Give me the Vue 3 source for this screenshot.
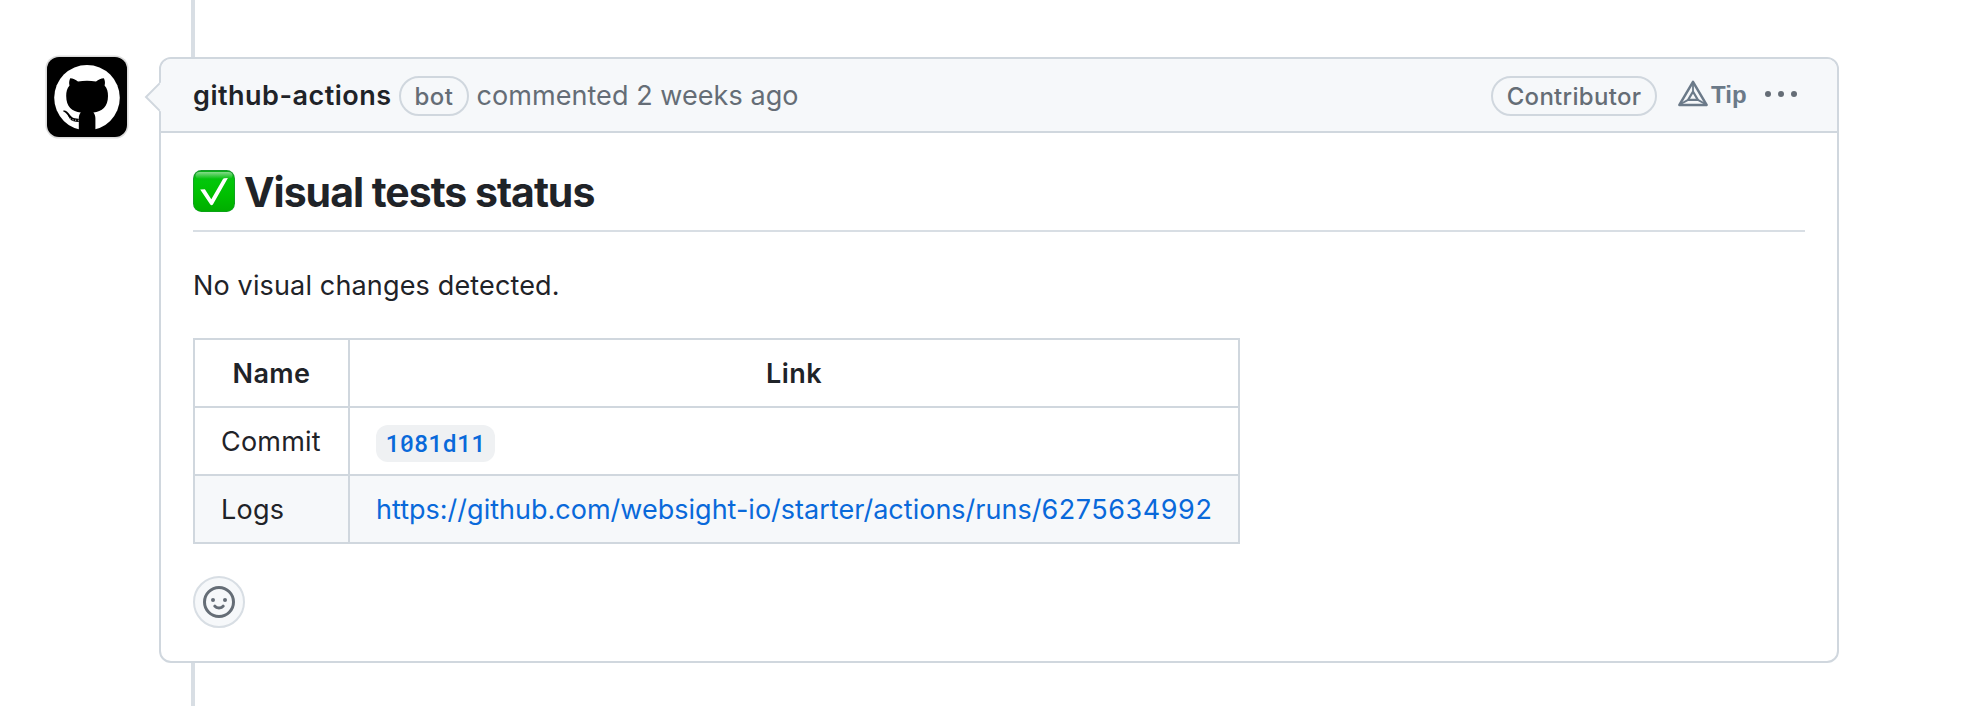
<script setup>
const runPath = 'https://github.com/websight-io/starter/actions/runs/'
const runId = '6275634992'
const commit = '1081d11'
</script>

<template>
  <main class="timeline">
    <svg class="avatar" width="84" height="84" viewBox="-2 -2 84 84">
      <rect x="-1.6" y="-1.6" width="83.2" height="83.2" rx="13.5" fill="#dcdcdc" />
      <rect width="80" height="80" rx="12" fill="#000" />
      <circle cx="40" cy="40.7" r="32.8" fill="#fff" />
      <path
        d="M23.2 21.3C26 21.3 28.6 22.7 31 24.5C37 23.6 43 23.6 49 24.5C51.4 22.7 54 21.3 56.9 21.3C58.2 24 58.2 26.2 57.6 28.6C60.2 31.6 61 35 61 39C61 50 55 54.6 46.4 55.4C47.8 57 48.4 59 48.4 61.5V75H31.8V61.5C31.8 59 32.3 57 33.8 55.4C25 54.6 19.2 50 19.2 39C19.2 35 20 31.6 22.5 28.6C21.9 26.2 22 24 23.2 21.3Z"
        fill="#000"
      />
      <path d="M16.3 53.6C23.5 53.6 21 62 31.8 61.8V65C23 65 22.5 61 20.5 58C19.2 56 17.8 55.4 16.3 54.6Z" fill="#000" />
      <path d="M19.5 57.8C22 62 24.5 63.2 31.5 63.4" fill="none" stroke="#fff" stroke-width=".9" stroke-dasharray="1 1.7" />
    </svg>

    <article class="comment">
      <svg class="caret" width="17" height="30" viewBox="0 0 17 30">
        <path d="M17 .5L15.5 1.5L2 15L15.5 28.5L17 29.5Z" fill="#f6f8fa" />
        <path d="M15.6 1.4L2 15L15.6 28.6" fill="none" stroke="#d0d7de" stroke-width="2" />
      </svg>

      <header class="head">
        <strong class="author">github-actions</strong>
        <span class="pill bot">bot</span>
        <span class="when">commented 2 weeks ago</span>
        <span class="pill role">Contributor</span>
        <span class="tip">
          <svg width="30" height="27" viewBox="0 0 30 27" fill="none" stroke="#6b7a89" stroke-linejoin="round">
            <path d="M15 1.8L28.6 24.9H1.4Z" stroke-width="2.5" />
            <path d="M15 11.6L19.9 19.9H10.1Z" stroke-width="2.1" />
            <path d="M15 2V11.6M1.8 24.5L10.1 19.9M28.2 24.5L19.9 19.9" stroke-width="1.8" />
          </svg>
          <b>Tip</b>
        </span>
        <svg class="more" width="32" height="32" viewBox="0 0 32 32" fill="#656d76">
          <circle cx="3" cy="16" r="3" /><circle cx="16" cy="16" r="3" /><circle cx="29" cy="16" r="3" />
        </svg>
      </header>

      <div class="body">
        <h2>
          <svg width="42" height="42" viewBox="0 0 42 42">
            <defs>
              <linearGradient id="tick-bg" x1="0" y1="0" x2="0" y2="1">
                <stop offset="0" stop-color="#08b414" /><stop offset=".25" stop-color="#02c60a" />
                <stop offset=".6" stop-color="#00bf00" /><stop offset="1" stop-color="#00ad00" />
              </linearGradient>
              <linearGradient id="tick-gloss" x1="0" y1="0" x2="0" y2="1">
                <stop offset="0" stop-color="#fff" stop-opacity=".5" /><stop offset="1" stop-color="#fff" stop-opacity="0" />
              </linearGradient>
            </defs>
            <rect width="42" height="42" rx="8.5" fill="#159b2a" />
            <rect x=".8" y="1.3" width="40.4" height="40.2" rx="8" fill="url(#tick-bg)" />
            <rect x="2.5" y="2" width="37" height="7" rx="4" fill="url(#tick-gloss)" />
            <path d="M7.2 19.6L11.9 19.3L18.3 29.3L30 9Q30.5 8.2 31.4 8.2L34.9 8L19.9 34.4Q18.6 36 17.3 34.4Z" fill="#fff" />
          </svg>
          <span>Visual tests status</span>
        </h2>

        <p>No visual changes detected.</p>

        <table>
          <colgroup><col class="c-name" /><col class="c-link" /></colgroup>
          <thead>
            <tr><th>Name</th><th>Link</th></tr>
          </thead>
          <tbody>
            <tr><td class="label">Commit</td><td class="cell-code"><a class="code">{{ commit }}</a></td></tr>
            <tr class="alt"><td class="label">Logs</td><td><a class="url">{{ runPath }}<span class="run-id">{{ runId }}</span></a></td></tr>
          </tbody>
        </table>

        <button class="react" type="button" aria-label="Add reaction">
          <svg width="32" height="32" viewBox="0 0 16 16" fill="#656d76">
            <path d="M8 0a8 8 0 1 1 0 16A8 8 0 0 1 8 0ZM1.5 8a6.5 6.5 0 1 0 13 0 6.5 6.5 0 0 0-13 0Z" />
            <circle cx="5" cy="7" r="1" /><circle cx="11" cy="7" r="1" />
            <path d="M5.9 10.1C6.8 11.3 9.2 11.3 10.1 10.1" fill="none" stroke="#656d76" stroke-width="1.5" stroke-linecap="round" />
          </svg>
        </button>
      </div>
    </article>
  </main>
</template>

<style>
body {
  background: #fff;
}
</style>

<style scoped>
.timeline {
  box-sizing: border-box;
  position: relative;
  display: flex;
  align-items: flex-start;
  height: 706px;
  padding: 57px 143px 43px 45px;
  overflow: hidden;
  font: 400 27px/42px Inter, "Liberation Sans", sans-serif;
  color: #1f2328;
}
.timeline::before {
  content: "";
  position: absolute;
  left: 191px;
  top: 0;
  bottom: 0;
  width: 4px;
  background: #d8dee4;
}
.avatar {
  flex: none;
  margin: -2px 30px 0 0;
}
.comment {
  box-sizing: border-box;
  position: relative;
  flex: 1;
  height: 606px;
  border: 2px solid #d0d7de;
  border-radius: 12px;
  background: #fff;
}
.caret {
  position: absolute;
  left: -17px;
  top: 23px;
}
.head {
  display: flex;
  align-items: center;
  height: 72px;
  padding: 0 40px 0 32px;
  border-bottom: 2px solid #d0d7de;
  border-radius: 10px 10px 0 0;
  background: #f6f8fa;
  color: #656d76;
  white-space: nowrap;
}
.author {
  width: 206px;
  margin-top: 2px;
  font-weight: 600;
  letter-spacing: 0.5px;
  color: #1f2328;
}
.pill {
  box-sizing: border-box;
  height: 40px;
  margin-top: 2px;
  border: 2px solid #d0d7de;
  border-radius: 20px;
  font-size: 24px;
  font-weight: 500;
  line-height: 38px;
  text-align: center;
}
.bot {
  width: 70px;
  letter-spacing: 0.5px;
}
.when {
  margin: 2px 0 0 7.5px;
  letter-spacing: 0.06px;
}
.role {
  width: 166px;
  margin-left: auto;
  letter-spacing: 0.3px;
}
.tip {
  display: flex;
  align-items: center;
  width: 87px;
  margin-left: 21px;
  color: #6b7a89;
}
.tip svg {
  margin-top: -4px;
}
.tip b {
  margin: 0 0 0 3px;
  font: 700 24px/30px "Liberation Sans", Arial, sans-serif;
}
.more {
  margin-top: -2px;
}
.body {
  padding: 33px 32px 0;
}
h2 {
  display: flex;
  align-items: center;
  gap: 9px;
  height: 52px;
  margin: 0;
  padding-bottom: 12px;
  border-bottom: 2px solid #d8dee4;
  font-size: 41px;
  font-weight: 700;
  line-height: 52px;
  letter-spacing: -1.02px;
}
h2 svg {
  margin-top: -2px;
}
p {
  margin: 33px 0 31px;
  letter-spacing: 0.15px;
}
table {
  table-layout: fixed;
  width: 1047px;
  border-collapse: collapse;
}
.c-name {
  width: 155px;
}
.c-link {
  width: 890px;
}
th,
td {
  box-sizing: border-box;
  height: 68px;
  padding: 2px 26px 0;
  border: 2px solid #d0d7de;
  text-align: left;
  white-space: nowrap;
}
th {
  font-weight: 600;
  letter-spacing: 0.45px;
  text-align: center;
}
.label {
  letter-spacing: 0.22px;
}
.alt {
  background: #f6f8fa;
}
.url {
  color: #0969da;
  letter-spacing: 0.01px;
}
.run-id {
  letter-spacing: 0.55px;
}
.code {
  display: block;
  box-sizing: border-box;
  width: max-content;
  height: 37px;
  margin-top: 3px;
  padding: 0 9.5px;
  border-radius: 12px;
  background: #eff1f3;
  color: #0969da;
  font: 500 23.8px/35px "Roboto Mono", "DejaVu Sans Mono", monospace;
}
.react {
  display: flex;
  box-sizing: border-box;
  width: 52px;
  height: 52px;
  margin: 32px 0 0;
  padding: 8px;
  border: 2px solid #d8dee4;
  border-radius: 50%;
  background: #f6f8fa;
}
</style>
